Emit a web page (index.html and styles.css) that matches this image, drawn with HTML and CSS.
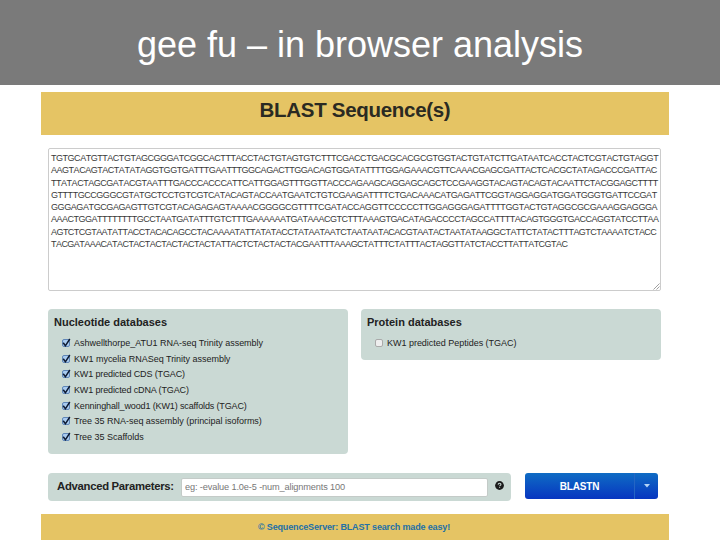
FILE: index.html
```html
<!DOCTYPE html>
<html lang="en">
<head>
<meta charset="utf-8">
<title>gee fu – in browser analysis</title>
<link rel="stylesheet" href="styles.css">
</head>
<body>
<header class="slide-title"><h1>gee fu – in browser analysis</h1></header>
<main class="app">
  <div class="banner"><h2>BLAST Sequence(s)</h2></div>
  <form class="form">
    <div class="sequence">
      <span class="l1">TGTGCATGTTACTGTAGCGGGATCGGCACTTTACCTACTGTAGTGTCTTTCGACCTGACGCACGCGTGGTACTGTATCTTGATAATCACCTACTCGTACTGTAGGT</span>
      <span class="l2">AAGTACAGTACTATATAGGTGGTGATTTGAATTTGGCAGACTTGGACAGTGGATATTTTGGAGAAACGTTCAAACGAGCGATTACTCACGCTATAGACCCGATTAC</span>
      <span class="l3">TTATACTAGCGATACGTAATTTGACCCACCCATTCATTGGAGTTTGGTTACCCAGAAGCAGGAGCAGCTCCGAAGGTACAGTACAGTACAATTCTACGGAGCTTTT</span>
      <span class="l4">GTTTTGCCGGGCGTATGCTCCTGTCGTCATACAGTACCAATGAATCTGTCGAAGATTTTCTGACAAACATGAGATTCGGTAGGAGGATGGATGGGTGATTCCGAT</span>
      <span class="l5">GGGAGATGCGAGAGTTGTCGTACAGAGAGTAAAACGGGGCGTTTTCGATACCAGGTTCCCCCTTGGAGGGAGATTTTGGTACTGTAGGCGCGAAAGGAGGGA</span>
      <span class="l6">AAACTGGATTTTTTTTGCCTAATGATATTTGTCTTTGAAAAAATGATAAACGTCTTTAAAGTGACATAGACCCCTAGCCATTTTACAGTGGGTGACCAGGTATCCTTAA</span>
      <span class="l7">AGTCTCGTAATATTACCTACACAGCCTACAAAATATTATATACCTATAATAATCTAATAATACACGTAATACTAATATAAGGCTATTCTATACTTTAGTCTAAAATCTACC</span>
      <span class="l8">TACGATAAACATACTACTACTACTACTACTATTACTCTACTACTACGAATTTAAAGCTATTTCTATTTACTAGGTTATCTACCTTATTATCGTAC</span>
      <svg class="grip" viewBox="0 0 7 7"><path d="M.5 6.5l6-6M3.5 6.5l3-3"/></svg>
    </div>
    <div class="databases">
      <section class="panel nucleotide">
        <h3>Nucleotide databases</h3>
        <ul>
          <li><i class="check on"><svg viewBox="0 0 10 10"><path d="M2.2 4.8L4.4 7.8L8.8 1"/></svg></i><span class="n1">Ashwellthorpe_ATU1 RNA-seq Trinity assembly</span></li>
          <li><i class="check on"><svg viewBox="0 0 10 10"><path d="M2.2 4.8L4.4 7.8L8.8 1"/></svg></i><span class="n2">KW1 mycelia RNASeq Trinity assembly</span></li>
          <li><i class="check on"><svg viewBox="0 0 10 10"><path d="M2.2 4.8L4.4 7.8L8.8 1"/></svg></i><span class="n3">KW1 predicted CDS (TGAC)</span></li>
          <li><i class="check on"><svg viewBox="0 0 10 10"><path d="M2.2 4.8L4.4 7.8L8.8 1"/></svg></i><span class="n4">KW1 predicted cDNA (TGAC)</span></li>
          <li><i class="check on"><svg viewBox="0 0 10 10"><path d="M2.2 4.8L4.4 7.8L8.8 1"/></svg></i><span class="n5">Kenninghall_wood1 (KW1) scaffolds (TGAC)</span></li>
          <li><i class="check on"><svg viewBox="0 0 10 10"><path d="M2.2 4.8L4.4 7.8L8.8 1"/></svg></i><span class="n6">Tree 35 RNA-seq assembly (principal isoforms)</span></li>
          <li><i class="check on"><svg viewBox="0 0 10 10"><path d="M2.2 4.8L4.4 7.8L8.8 1"/></svg></i><span class="n7">Tree 35 Scaffolds</span></li>
        </ul>
      </section>
      <section class="panel protein">
        <h3>Protein databases</h3>
        <ul><li><i class="check"></i><span class="n8">KW1 predicted Peptides (TGAC)</span></li></ul>
      </section>
    </div>
    <div class="actions">
      <div class="advanced">
        <label for="advanced">Advanced Parameters:</label>
        <input id="advanced" type="text" placeholder="eg: -evalue 1.0e-5 -num_alignments 100">
        <svg class="help" viewBox="0 0 9 9"><circle cx="4.5" cy="4.5" r="4.4"/><path d="M3.1 3.6c.1-1.8 2.9-1.7 2.8-.1 0 .8-1.3.9-1.3 1.8M4.6 6.2v.9"/></svg>
      </div>
      <div class="submit">
        <button type="button" class="blast">BLASTN</button>
        <button type="button" class="more" aria-label="Methods"><svg viewBox="0 0 6 4"><path d="M0 0h6L3 3.4z"/></svg></button>
      </div>
    </div>
  </form>
  <footer class="footer"><a>© SequenceServer: BLAST search made easy!</a></footer>
</main>
</body>
</html>
```
FILE: styles.css
```css
* { box-sizing: border-box; }
body {
  margin: 0;
  width: 720px;
  height: 540px;
  overflow: hidden;
  background: #fff;
  color: #333;
  font-family: "Liberation Sans", Arial, sans-serif;
}
h1, h2, h3, ul { margin: 0; padding: 0; }
.slide-title {
  height: 85px;
  padding-top: 23px;
  background: #7a7a7a;
  text-align: center;
}
h1 { color: #fff; font-size: 36px; font-weight: 400; line-height: 44px; }
.app { width: 628px; margin: 7px 0 0 41px; }
.banner { height: 43px; padding-top: 6px; background: #e5c464; text-align: center; }
h2 { color: #2a2a22; font-size: 20.5px; line-height: 24px; letter-spacing: -.3px; }
.form { padding: 13px 8px 0 7px; }
.sequence {
  position: relative;
  height: 143px;
  padding: 3px 0 0 2px;
  border: 1px solid #ccc;
  border-radius: 2px;
  color: #3a3a3a;
  font-size: 9px;
  line-height: 12.25px;
  letter-spacing: -.47px;
  font-kerning: none;
  white-space: nowrap;
}
.sequence span { display: block; width: max-content; }
.l4 { letter-spacing: -.46px; }
.l5 { letter-spacing: -.41px; }
.l6 { letter-spacing: -.51px; }
.l7, .l8 { letter-spacing: -.543px; }
.grip { position: absolute; right: 0; bottom: 0; width: 7px; height: 7px; fill: none; stroke: #777; stroke-width: .7; }
.databases { display: flex; align-items: flex-start; gap: 13px; margin-top: 18px; }
.panel { width: 300px; padding: 7px 6px; border-radius: 4px; background: #cad9d4; color: #222; }
.nucleotide { height: 145px; }
.protein { height: 51px; }
h3 { font-size: 11px; line-height: 13px; white-space: nowrap; }
ul { margin-top: 6px; list-style: none; }
li { display: flex; align-items: center; height: 15.7px; padding-left: 8px; font-size: 9px; white-space: nowrap; }
.n1, .n2, .n6, .n7, .n8 { letter-spacing: -.02px; }
.n3, .n4, .n5 { letter-spacing: -.13px; }
.check { width: 8px; height: 8px; margin-right: 4px; border: 1px solid #aaa; border-radius: 2px; background: #eee; }
.on { border-color: #5f86b8; background: #a9cbf0; }
.check svg { display: block; width: 10px; height: 10px; margin: -2px 0 0 -2px; fill: none; stroke: #0c1830; stroke-width: 1.5; }
.actions { display: flex; gap: 14px; margin-top: 19px; }
.advanced { display: flex; align-items: center; width: 463px; height: 28px; padding-left: 9px; border-radius: 4px; background: #cad9d4; }
label { width: 124px; margin-top: -2px; color: #222; font-size: 11.3px; font-weight: 700; letter-spacing: -.28px; white-space: nowrap; }
input { width: 307px; height: 19px; padding: 0 3px; border: 1px solid #c4cbc8; border-radius: 2px; background: #fff; font: 9.2px "Liberation Sans", Arial, sans-serif; letter-spacing: -.13px; }
input::placeholder { color: #777; }
.help { width: 9px; height: 9px; margin: -3px 0 0 7px; fill: #1c1c1c; }
.help path { fill: none; stroke: #cad9d4; stroke-width: 1.1; }
.submit { display: flex; width: 133px; height: 26px; overflow: hidden; border-radius: 3px; background: linear-gradient(#0f6cc4, #0735c0); }
button { padding: 0; border: 0; background: none; color: #fff; font: 700 10px "Liberation Sans", Arial, sans-serif; letter-spacing: -.2px; }
.blast { width: 109px; }
.more { display: flex; align-items: center; justify-content: center; width: 24px; border-left: 1px solid #2465c4; }
.more svg { width: 6px; height: 4px; fill: #b5d4f7; }
.footer { height: 27px; margin-top: 13px; padding-right: 2px; background: #e5c464; text-align: center; font-size: 9px; font-weight: 700; line-height: 26px; letter-spacing: -.15px; }
.footer a { color: #2270a8; }
```
